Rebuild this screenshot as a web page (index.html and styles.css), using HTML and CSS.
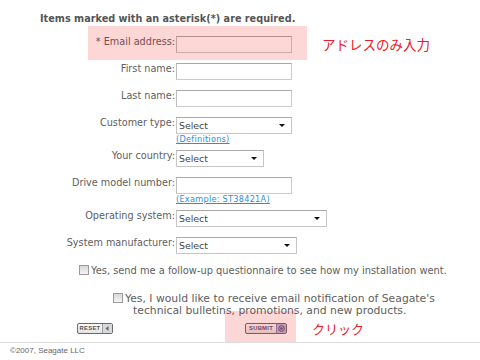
FILE: index.html
```
<!DOCTYPE html>
<html lang="en">
<head>
<meta charset="utf-8">
<title>Seagate registration</title>
<link rel="stylesheet" href="styles.css">
</head>
<body>
<div class="page">
  <p class="intro">Items marked with an asterisk(*) are required.</p>
  <form class="form">
    <div class="fields">
      <div class="row">
        <label class="lbl">* Email address:</label>
        <div class="field"><input class="txt" type="text"></div>
        <span class="note note-email">アドレスのみ入力</span>
      </div>
      <div class="row">
        <label class="lbl">First name:</label>
        <div class="field"><input class="txt" type="text"></div>
      </div>
      <div class="row">
        <label class="lbl">Last name:</label>
        <div class="field"><input class="txt" type="text"></div>
      </div>
      <div class="row">
        <label class="lbl">Customer type:</label>
        <div class="field">
          <span class="sel w116"><select><option>Select</option></select></span>
          <a class="hint" href="#">(Definitions)</a>
        </div>
      </div>
      <div class="row">
        <label class="lbl">Your country:</label>
        <div class="field"><span class="sel w88"><select><option>Select</option></select></span></div>
      </div>
      <div class="row">
        <label class="lbl">Drive model number:</label>
        <div class="field">
          <input class="txt" type="text">
          <a class="hint" href="#">(Example: ST38421A)</a>
        </div>
      </div>
      <div class="row">
        <label class="lbl">Operating system:</label>
        <div class="field"><span class="sel w151"><select><option>Select</option></select></span></div>
      </div>
      <div class="row">
        <label class="lbl">System manufacturer:</label>
        <div class="field"><span class="sel w121"><select><option>Select</option></select></span></div>
      </div>
    </div>

    <div class="checks">
      <p class="check check-1"><input class="cb" type="checkbox">Yes, send me a follow-up questionnaire to see how my installation went.</p>
      <p class="check check-2"><input class="cb" type="checkbox">Yes, I would like to receive email notification of Seagate's<br>technical bulletins, promotions, and new products.</p>
    </div>

    <div class="buttons">
      <button class="btn btn-reset" type="button"><span class="btn-text">RESET</span><span class="btn-ico"><svg width="5" height="5" viewBox="0 0 5 5"><path d="M0.5 2.5 L3.5 0 V5 Z" fill="#666"/></svg></span></button>
      <button class="btn btn-submit" type="button"><span class="btn-text">SUBMIT</span><span class="btn-ico"><svg width="7" height="7" viewBox="0 0 7 7"><circle cx="3.5" cy="3.5" r="2.8" fill="none" stroke="#55557a" stroke-width="1"/><circle cx="3.5" cy="3.5" r="1.3" fill="#55557a"/></svg></span></button>
      <span class="note note-click">クリック</span>
    </div>
  </form>
  <footer class="footer">©2007, Seagate LLC</footer>

  <div class="mark mark-email"></div>
  <div class="mark mark-submit"></div>
</div>
</body>
</html>
```
FILE: styles.css
```
html, body {
  margin: 0;
  background: #fff;
}
body {
  font-family: "DejaVu Sans", Verdana, sans-serif;
  font-size: 9.7px;
  color: #5e5e5e;
}
.page {
  position: relative;
  width: 480px;
  height: 360px;
  overflow: hidden;
}
.intro {
  margin: 0;
  padding: 13px 0 0 40px;
  line-height: 12px;
  font-weight: bold;
  color: #555;
}
.fields {
  display: flex;
  flex-direction: column;
  gap: 10px;
  margin-top: 11px;
}
.row {
  display: flex;
  align-items: flex-start;
}
.lbl {
  flex: none;
  width: 175px;
  margin-right: 1px;
  text-align: right;
  line-height: 12px;
  white-space: nowrap;
}
.field {
  display: flex;
  flex-direction: column;
  align-items: flex-start;
}
.txt {
  box-sizing: border-box;
  width: 116px;
  height: 17px;
  margin: 0;
  padding: 0 3px;
  border: 1px solid #cbcbcb;
  border-top-color: #a9a9a9;
  border-left-color: #bcbcbc;
  background: #fff;
  font: inherit;
}
.sel {
  position: relative;
  display: block;
}
.sel select {
  -webkit-appearance: none;
  appearance: none;
  box-sizing: border-box;
  display: block;
  width: 100%;
  height: 17px;
  margin: 0;
  padding: 0 0 0 2px;
  border: 1px solid #c6c6c6;
  border-top-color: #a9a9a9;
  border-radius: 0;
  background: #fff;
  font-family: "DejaVu Sans", Verdana, sans-serif;
  font-size: 9.4px;
  color: #444;
}
.sel::after {
  content: "";
  position: absolute;
  right: 7px;
  top: 7px;
  border-left: 3px solid transparent;
  border-right: 3px solid transparent;
  border-top: 3px solid #111;
  pointer-events: none;
}
.w116 { width: 116px; }
.w88 { width: 88px; }
.w151 { width: 151px; }
.w121 { width: 121px; }
.hint {
  display: block;
  margin-bottom: -4px;
  font-size: 8.2px;
  line-height: 10px;
  letter-spacing: 0.25px;
  color: #2e8fd8;
  text-decoration: underline;
}
.note {
  font-family: "Noto Sans CJK JP", sans-serif;
  color: #e8202a;
}
.note-email {
  margin-left: 30px;
  font-size: 13.5px;
  line-height: 17px;
}
.checks {
  margin-top: 11px;
}
.check {
  margin: 0;
  line-height: 12px;
}
.check-1 {
  padding-left: 79px;
  font-size: 9.85px;
}
.check-2 {
  margin-top: 16px;
  padding-left: 133px;
  text-indent: -20px;
  font-size: 10.8px;
}
.cb {
  -webkit-appearance: none;
  appearance: none;
  box-sizing: border-box;
  width: 10px;
  height: 10px;
  margin: 0 2px 0 0;
  border: 1px solid #9a9a9a;
  background: linear-gradient(#d8d8d8, #f4f4f4);
  vertical-align: -1px;
}
.buttons {
  display: flex;
  align-items: center;
  height: 13px;
  margin-top: 5px;
  padding-left: 77px;
}
.btn {
  display: inline-flex;
  align-items: stretch;
  box-sizing: border-box;
  height: 11px;
  margin: 0;
  padding: 0;
  border: 1px solid #6a6a6a;
  border-radius: 2px;
  background: linear-gradient(#fbfbfb, #e2e2e2);
  font-family: "Liberation Sans", Arial, sans-serif;
  font-weight: bold;
  font-size: 5.8px;
  letter-spacing: 0.3px;
  color: #555;
  overflow: hidden;
}
.btn-text {
  flex: 1;
  line-height: 9px;
  text-align: center;
}
.btn-ico {
  display: flex;
  align-items: center;
  justify-content: center;
  width: 9px;
  border-left: 1px solid #a0a0a0;
  background: #d9d9d9;
}
.btn-reset {
  width: 36px;
  margin-right: 132px;
}
.btn-submit {
  width: 42px;
  color: #55557a;
  margin-right: 25px;
}
.btn-submit .btn-ico {
  background: #b9b9d9;
  border-left-color: #8a8aaa;
}
.note-click {
  font-size: 13px;
  line-height: 13px;
}
.footer {
  margin-top: 7px;
  padding: 2px 0 0 10px;
  border-top: 1px solid #dcdcdc;
  font-family: "Liberation Sans", Arial, sans-serif;
  font-size: 8px;
  line-height: 12px;
  color: #666;
}
.mark {
  position: absolute;
  background: rgba(240, 0, 0, 0.16);
  pointer-events: none;
}
.mark-email {
  left: 88px;
  top: 26px;
  width: 219px;
  height: 34px;
}
.mark-submit {
  left: 225px;
  top: 311px;
  width: 71px;
  height: 31px;
}
```
